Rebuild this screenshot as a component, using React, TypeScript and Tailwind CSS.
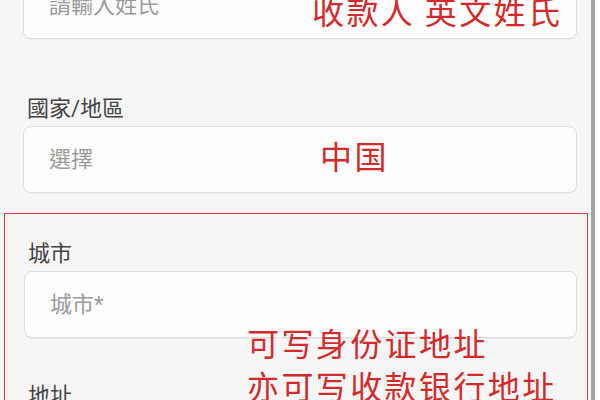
const cjk = "font-['Roboto','Noto_Sans_CJK_TC',sans-serif]";
const red = "font-['Noto_Sans_CJK_SC',sans-serif] text-[#d42a2a] leading-[43px] text-[32px] tracking-[2.4px]";

function Field({ placeholder }: { placeholder: string }) {
  return (
    <div className="flex h-[67px] items-center rounded-[8px] border border-[#dedede] bg-[#fdfdfd] pl-[25px] shadow-[0_1px_1px_rgba(0,0,0,0.04)]">
      <span className={`${cjk} text-[22px] text-[#9a9a9a]`}>{placeholder}</span>
    </div>
  );
}

function Label({ text }: { text: string }) {
  return <p className={`${cjk} pl-[4px] text-[22px] leading-[28px] text-[#444]`}>{text}</p>;
}

export default function App() {
  return (
    <div className="flex h-[400px] w-[600px] overflow-hidden bg-white">
      <main className="relative w-[591px] shrink-0 bg-[#f6f6f6]">
        <div className="-mt-[28px] pl-[23px] pr-[14px]">
          <Field placeholder="請輸入姓氏" />
          <div className="mt-[56px] space-y-[3px]">
            <Label text="國家/地區" />
            <Field placeholder="選擇" />
          </div>
        </div>

        <section className="mt-[20px] ml-[4px] mr-[3px] border-[1.5px] border-b-0 border-[#d23a3a] pt-[26px] pl-[19px] pr-[10px]">
          <div className="space-y-[3px]">
            <Label text="城市" />
            <Field placeholder="城市*" />
          </div>
          <div className="mt-[44px]">
            <Label text="地址" />
          </div>
        </section>

        <p className={`${red} absolute left-[312px] top-[-11px]`}>收款人 英文姓氏</p>
        <p className={`${red} absolute left-[320px] top-[134px]`}>中国</p>
        <div className={`${red} absolute left-[247px] top-[321px]`}>
          <p>可写身份证地址</p>
          <p>亦可写收款银行地址</p>
        </div>
      </main>
      <div className="w-[4px] shrink-0 bg-[#a3a3a3]" />
      <div className="flex-1 bg-white" />
    </div>
  );
}
